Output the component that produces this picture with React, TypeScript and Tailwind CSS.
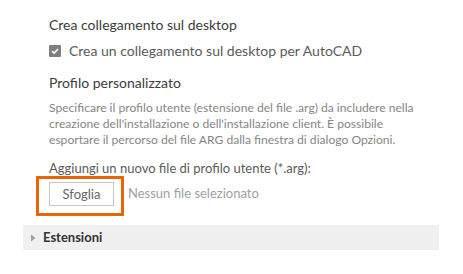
export default function App() {
  return (
    <div
      className="h-[274px] w-[463px] bg-white pl-[23px] pt-[16px] text-[#3c3c3c]"
      style={{ fontFamily: 'Lato, sans-serif' }}
    >
      <div className="w-[416px]">
        <div className="pl-[26px]">
          {/* Shortcut */}
          <div className="text-[14px] leading-[17px]">Crea collegamento sul desktop</div>
          <label className="mt-[9px] flex items-center gap-[8px] text-[14px] leading-[17px] text-[#5a5a5a]">
            <span className="flex h-[12px] w-[12px] items-center justify-center rounded-[1px] bg-[#808080]">
              <svg viewBox="0 0 12 12" className="h-[10px] w-[10px]">
                <path d="M2.5 6.2 L5 8.5 L9.5 3.5" fill="none" stroke="white" strokeWidth="1.8" />
              </svg>
            </span>
            Crea un collegamento sul desktop per AutoCAD
          </label>

          {/* Profile */}
          <div className="mt-[15px] text-[14px] leading-[17px]">Profilo personalizzato</div>
          <p className="mt-[9px] whitespace-nowrap text-[12.1px] leading-[16px] text-[#858585]">
            Specificare il profilo utente (estensione del file .arg) da includere nella
            <br />
            creazione dell'installazione o dell'installazione client. È possibile
            <br />
            esportare il percorso del file ARG dalla finestra di dialogo Opzioni.
          </p>
          <div className="mt-[13px] text-[13px] leading-[15px] text-[#5a5a5a]">
            Aggiungi un nuovo file di profilo utente (*.arg):
          </div>
          <div className="flex items-start">
            <div className="-ml-[13px] border-[3px] border-[#e8650a] pb-[7px] pl-[10px] pr-[7px] pt-[3px]">
              <button className="block h-[24px] w-[65px] border border-[#c6c6c6] bg-white text-[13px] leading-none text-[#666]">
                Sfoglia
              </button>
            </div>
            <span className="ml-[4px] mt-[9px] text-[13px] leading-[17px] text-[#a0a0a0]">
              Nessun file selezionato
            </span>
          </div>
        </div>

        {/* Extensions */}
        <div className="mt-[9px] flex h-[25px] items-center bg-[#f0f0f0] pl-[8px]">
          <svg viewBox="0 0 5 8" className="h-[8px] w-[5px]">
            <path d="M0 0.5 L4.5 4 L0 7.5 Z" fill="#a0a0a0" />
          </svg>
          <span className="ml-[7px] text-[13px] font-bold text-[#333]">Estensioni</span>
        </div>
      </div>
    </div>
  );
}
